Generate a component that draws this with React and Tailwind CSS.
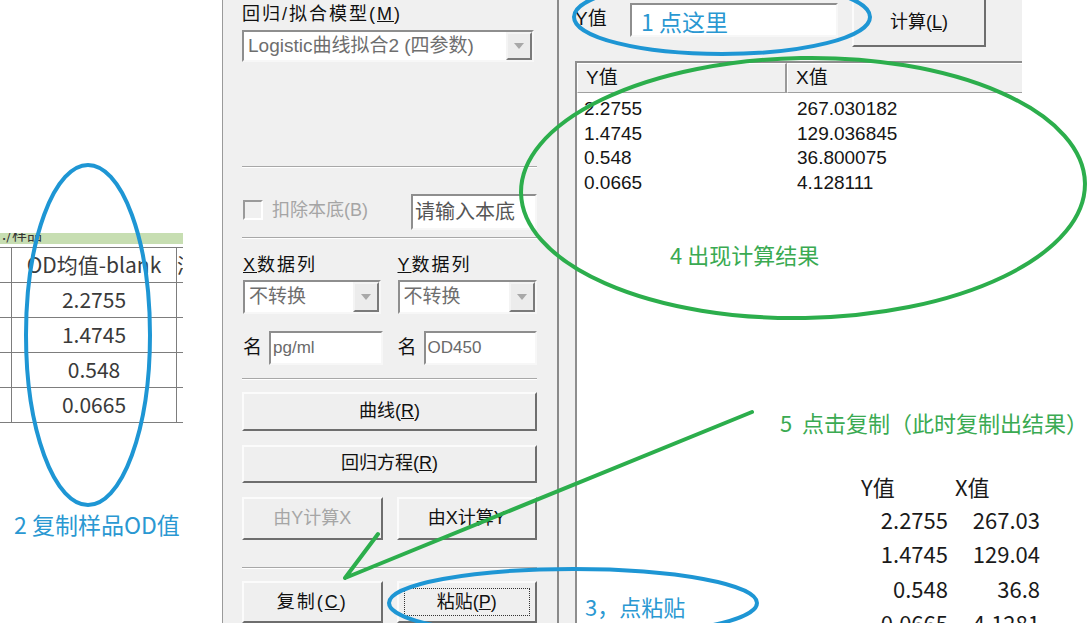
import React from "react";

const F = { fontFamily: '"Liberation Sans","Noto Sans CJK SC",sans-serif' };
const CJK = { fontFamily: '"Noto Sans CJK SC","Liberation Sans",sans-serif' };

function Sunken({ className = "", children }) {
  return (
    <div
      className={
        "border-2 border-t-[#8e8e8e] border-l-[#8e8e8e] border-b-[#f7f7f7] border-r-[#f7f7f7] bg-white " +
        className
      }
    >
      {children}
    </div>
  );
}

function Arrow() {
  return (
    <div className="w-[26px] h-full border-2 border-t-[#f4f4f4] border-l-[#f4f4f4] border-b-[#7a7a7a] border-r-[#7a7a7a] bg-[#ececec] flex items-center justify-center">
      <svg width="10" height="6" viewBox="0 0 10 6">
        <path d="M0 0 L10 0 L5 6 Z" fill="#a8a8a8" />
      </svg>
    </div>
  );
}

function Combo({ text, className = "", size = "text-[18px]" }) {
  return (
    <Sunken className={"flex items-stretch " + className}>
      <div className={"flex-1 flex items-center pl-[4px] text-[#6e6e6e] whitespace-nowrap overflow-hidden " + size}>
        {text}
      </div>
      <Arrow />
    </Sunken>
  );
}

function Btn({ children, className = "", disabled = false, focus = false }) {
  return (
    <div
      className={
        "border-2 border-t-[#fbfbfb] border-l-[#fbfbfb] border-b-[#6e6e6e] border-r-[#6e6e6e] bg-[#efefef] flex items-center justify-center text-[18px] " +
        (disabled ? "text-[#a6a6a6] " : "text-[#111] ") +
        className
      }
    >
      {focus ? (
        <div className="border border-dotted border-[#333] w-[calc(100%-10px)] h-[calc(100%-10px)] flex items-center justify-center">
          {children}
        </div>
      ) : (
        children
      )}
    </div>
  );
}

function Sep({ className = "" }) {
  return <div className={"h-[2px] border-t border-t-[#a8a8a8] border-b border-b-white " + className} />;
}

export default function App() {
  const rowsY = ["2.2755", "1.4745", "0.548", "0.0665"];
  const rowsX = ["267.030182", "129.036845", "36.800075", "4.128111"];
  return (
    <div className="relative w-[1087px] h-[623px] overflow-hidden bg-white flex" style={F}>
      {/* Excel fragment */}
      <div className="w-[222px] pt-[233px] shrink-0">
        <div className="w-[183px] h-[11px] bg-[#c7deb2] overflow-hidden">
          <div className="text-[15px] leading-[15px] -mt-[7px] text-[#333] pl-[2px]" style={CJK}>
            ./样品
          </div>
        </div>
        <div className="mt-[3px] w-[183px] text-[#3a3a3a]" style={CJK}>
          {[
            ["OD均值-blank", 36],
            ["2.2755", 35],
            ["1.4745", 35],
            ["0.548", 35],
            ["0.0665", 35],
          ].map(([t, h], i) => (
            <div key={i} className="flex border-b border-[#7d7d7d] first:border-t" style={{ height: h }}>
              <div className="w-[12px] border-r border-[#7d7d7d]" />
              <div className="w-[165px] border-r border-[#7d7d7d] flex items-center justify-center text-[21px] whitespace-nowrap">
                {t}
              </div>
              <div className="flex-1 overflow-hidden text-[21px] flex items-center">{i === 0 ? "浓" : ""}</div>
            </div>
          ))}
        </div>
      </div>

      {/* Left dialog panel */}
      <div
        className="w-[337px] shrink-0 bg-[#f0f0f0] border-l border-l-[#9a9a9a] border-r-2 border-r-[#8a8a8a] pl-[19px] pr-[20px] flex flex-col text-[#111]"
        style={F}
      >
        <div className="mt-[2px] h-[24px] text-[18px] leading-[24px] tracking-[2px] whitespace-nowrap">
          回归/拟合模型(<u>M</u>)
        </div>
        <Combo text="Logistic曲线拟合2 (四参数)" size="text-[19px]" className="mt-[4px] h-[32px] w-[292px]" />
        <Sep className="mt-[104px]" />
        <div className="mt-[26px] h-[36px] flex items-center">
          <div className="w-[20px] h-[20px] -mt-[4px] ml-[1px] border-2 border-t-[#9a9a9a] border-l-[#9a9a9a] border-b-white border-r-white bg-[#f0f0f0]" />
          <div className="ml-[9px] -mt-[4px] text-[18px] text-[#a5a5a5] whitespace-nowrap">扣除本底(B)</div>
          <Sunken className="ml-auto w-[126px] h-[36px] flex items-center pl-[2px] text-[20px] text-[#555] whitespace-nowrap overflow-hidden">
            请输入本底
          </Sunken>
        </div>
        <Sep className="mt-[7px]" />
        <div className="mt-[14px] grid grid-cols-2 gap-[14px]">
          <div className="h-[24px] text-[18px] leading-[24px] tracking-[2px] pl-[1px] whitespace-nowrap">
            <u>X</u>数据列
          </div>
          <div className="h-[24px] text-[18px] leading-[24px] tracking-[2px] pl-[1px] whitespace-nowrap">
            <u>Y</u>数据列
          </div>
        </div>
        <div className="mt-[3px] grid grid-cols-2 gap-[14px]">
          <Combo text="不转换" size="text-[19px]" className="h-[34px] ml-[1px] mr-[2px]" />
          <Combo text="不转换" size="text-[19px]" className="h-[34px] ml-[1px]" />
        </div>
        <div className="mt-[17px] grid grid-cols-2 gap-[14px]">
          {["pg/ml", "OD450"].map((t) => (
            <div key={t} className="flex items-center h-[34px]">
              <div className="w-[27px] pl-[1px] text-[19px]">名</div>
              <Sunken className="flex-1 h-[34px] flex items-center pl-[2px] text-[17px] text-[#6a6a6a]">
                {t}
              </Sunken>
            </div>
          ))}
        </div>
        <Sep className="mt-[13px]" />
        <Btn className="mt-[12px] h-[42px]">曲线(<u>R</u>)</Btn>
        <Btn className="mt-[14px] h-[42px]">回归方程(<u>R</u>)</Btn>
        <div className="mt-[14px] grid grid-cols-2 gap-[14px]">
          <Btn disabled className="h-[43px]">由Y计算X</Btn>
          <Btn className="h-[43px]">由X计算Y</Btn>
        </div>
        <Sep className="mt-[27px]" />
        <div className="mt-[12px] grid grid-cols-2 gap-[14px]">
          <Btn className="h-[42px] tracking-[2px]">复制(<u>C</u>)</Btn>
          <Btn focus className="h-[42px]">粘贴(<u>P</u>)</Btn>
        </div>
      </div>

      {/* Right dialog panel */}
      <div className="w-[463px] shrink-0 bg-[#f0f0f0] pl-[16px] flex flex-col" style={F}>
        <div className="flex items-start h-[47px]">
          <div className="w-[55px] mt-[5px] text-[19px] text-[#111]">Y值</div>
          <Sunken className="mt-[3px] w-[208px] h-[34px]" />
          <Btn className="ml-[14px] -mt-[3px] w-[134px] h-[50px]">计算(<u>L</u>)</Btn>
        </div>
        <div className="mt-[14px] flex-1 border-t-2 border-l-2 border-t-[#8e8e8e] border-l-[#8e8e8e] bg-white flex flex-col">
          <div className="h-[30px] flex bg-[#f0f0f0] text-[19px] text-[#111]">
            <div className="w-[210px] border-t border-l border-white border-b border-b-[#a0a0a0] border-r-2 border-r-[#9a9a9a] pl-[8px] flex items-center">
              Y值
            </div>
            <div className="flex-1 border-t border-l border-white border-b border-b-[#a0a0a0] pl-[8px] flex items-center">
              X值
            </div>
          </div>
          <div className="pt-[4px] text-[19px] text-[#151515]">
            {rowsY.map((y, i) => (
              <div key={i} className="flex h-[24.5px] items-center">
                <div className="w-[210px] pl-[7px]">{y}</div>
                <div className="pl-[10px]">{rowsX[i]}</div>
              </div>
            ))}
          </div>
        </div>
      </div>
      <div className="flex-1 bg-white" />

      {/* Pasted Excel result (overlay) */}
      <div className="absolute left-[846px] top-[470px] text-[22px] text-[#1a1a1a]" style={CJK}>
        <div className="flex h-[32px] items-center">
          <div className="w-[100px] pl-[15px]">Y值</div>
          <div className="w-[94px] pl-[9px]">X值</div>
        </div>
        {[
          ["2.2755", "267.03"],
          ["1.4745", "129.04"],
          ["0.548", "36.8"],
          ["0.0665", "4.1281"],
        ].map(([a, b]) => (
          <div key={a} className="flex h-[34.5px] items-center">
            <div className="w-[102px] text-right">{a}</div>
            <div className="w-[92px] text-right">{b}</div>
          </div>
        ))}
      </div>

      {/* Annotation drawings */}
      <svg className="absolute inset-0 pointer-events-none" width="1087" height="623" viewBox="0 0 1087 623">
        <g fill="none" strokeWidth="4" strokeLinecap="round">
          <ellipse cx="88" cy="335" rx="62" ry="170" stroke="#1e96d4" />
          <ellipse cx="722" cy="17" rx="148" ry="37" stroke="#1e96d4" />
          <ellipse cx="573" cy="603" rx="184" ry="34" stroke="#1e96d4" />
          <ellipse cx="803" cy="188" rx="282" ry="130" stroke="#2cae4c" transform="rotate(-1 803 188)" />
          <path d="M752 412 L345 578 M378 534 L345 578" stroke="#2cae4c" />
        </g>
      </svg>

      {/* Annotation texts */}
      <div className="absolute left-[641px] top-[6px] text-[23px] leading-[30px] text-[#2a98d2]" style={CJK}>1 点这里</div>
      <div className="absolute left-[14px] top-[509px] text-[23px] leading-[30px] text-[#2a98d2] whitespace-nowrap" style={CJK}>2 复制样品OD值</div>
      <div className="absolute left-[585px] top-[591px] text-[22px] leading-[30px] text-[#2a98d2]" style={CJK}>3，点粘贴</div>
      <div className="absolute left-[670px] top-[239px] text-[22px] leading-[30px] text-[#3aaa52]" style={CJK}>4 出现计算结果</div>
      <div className="absolute left-[780px] top-[407px] text-[22px] leading-[30px] text-[#3aaa52] whitespace-nowrap" style={CJK}>5&nbsp;&nbsp;点击复制（此时复制出结果）</div>
    </div>
  );
}
